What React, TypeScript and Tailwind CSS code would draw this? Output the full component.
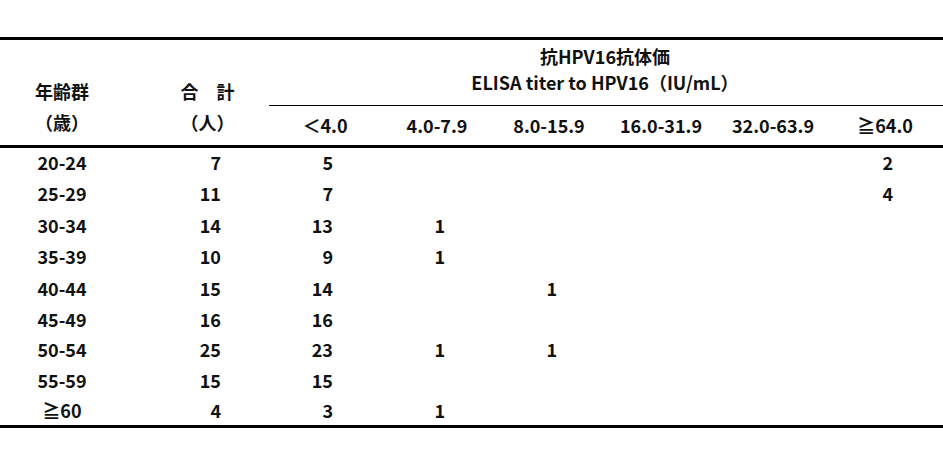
import React from 'react';

type Row = { age: string; total: string; vals: string[] };

const ROWS: Row[] = [
  { age: '20-24', total: '7', vals: ['5', '', '', '', '', '2'] },
  { age: '25-29', total: '11', vals: ['7', '', '', '', '', '4'] },
  { age: '30-34', total: '14', vals: ['13', '1', '', '', '', ''] },
  { age: '35-39', total: '10', vals: ['9', '1', '', '', '', ''] },
  { age: '40-44', total: '15', vals: ['14', '', '1', '', '', ''] },
  { age: '45-49', total: '16', vals: ['16', '', '', '', '', ''] },
  { age: '50-54', total: '25', vals: ['23', '1', '1', '', '', ''] },
  { age: '55-59', total: '15', vals: ['15', '', '', '', '', ''] },
  { age: '≧60', total: '4', vals: ['3', '1', '', '', '', ''] },
];

// row heights picked to land each line where the source sits
const HEIGHTS = [
  'h-[31px] pb-[3px]',
  'h-[32px] pb-[3px]',
  'h-[31px] pb-[3px]',
  'h-[32px] pb-[3px]',
  'h-[31px] pb-[3px]',
  'h-[31px] pb-[3px]',
  'h-[30px] pb-[3px]',
  'h-[30px] pb-[2px]',
  'h-[29px]',
];

const RANGES = ['＜4.0', '4.0-7.9', '8.0-15.9', '16.0-31.9', '32.0-63.9', '≧64.0'];

const App: React.FC = () => {
  return (
    <div className="w-[943px] h-[459px] bg-white pt-[37px] text-[18px] font-bold text-[#111] font-['Noto_Sans_CJK_JP',sans-serif]">
      <div className="border-t-[3px] border-b-[3px] border-black">
        <div className="flex h-[105px]">
          <div className="w-[124px] flex flex-col items-center justify-end pb-[7px]">
            <div className="h-[31px] leading-[31px]">年齢群</div>
            <div className="h-[31px] leading-[31px]">（歳）</div>
          </div>
          <div className="w-[145px] flex flex-col items-center justify-end pb-[7px] pl-[22px]">
            <div className="h-[31px] leading-[31px]">合　計</div>
            <div className="h-[31px] leading-[31px]">（人）</div>
          </div>
          <div className="flex-1 flex flex-col">
            <div className="h-[66px] border-b border-black flex flex-col items-center pt-[3px] pr-[2px]">
              <div className="h-[26px] leading-[26px]">抗HPV16抗体価</div>
              <div className="h-[26px] leading-[26px]">ELISA titer to HPV16（IU/mL）</div>
            </div>
            <div className="flex-1 flex items-center pb-[1px]">
              {RANGES.map((r) => (
                <div key={r} className="w-[112px] text-center">{r}</div>
              ))}
            </div>
          </div>
        </div>
      </div>
      <div className="border-b-[3px] border-black">
        {ROWS.map((row, i) => (
          <div key={row.age} className={`flex items-center ${HEIGHTS[i]}`}>
            <div className="w-[124px] text-center">{row.age}</div>
            <div className="w-[145px] text-right pr-[48px]">{row.total}</div>
            {row.vals.map((v, j) => (
              <div key={j} className="w-[112px] text-right pr-[48px]">{v}</div>
            ))}
          </div>
        ))}
      </div>
    </div>
  );
};

export default App;
